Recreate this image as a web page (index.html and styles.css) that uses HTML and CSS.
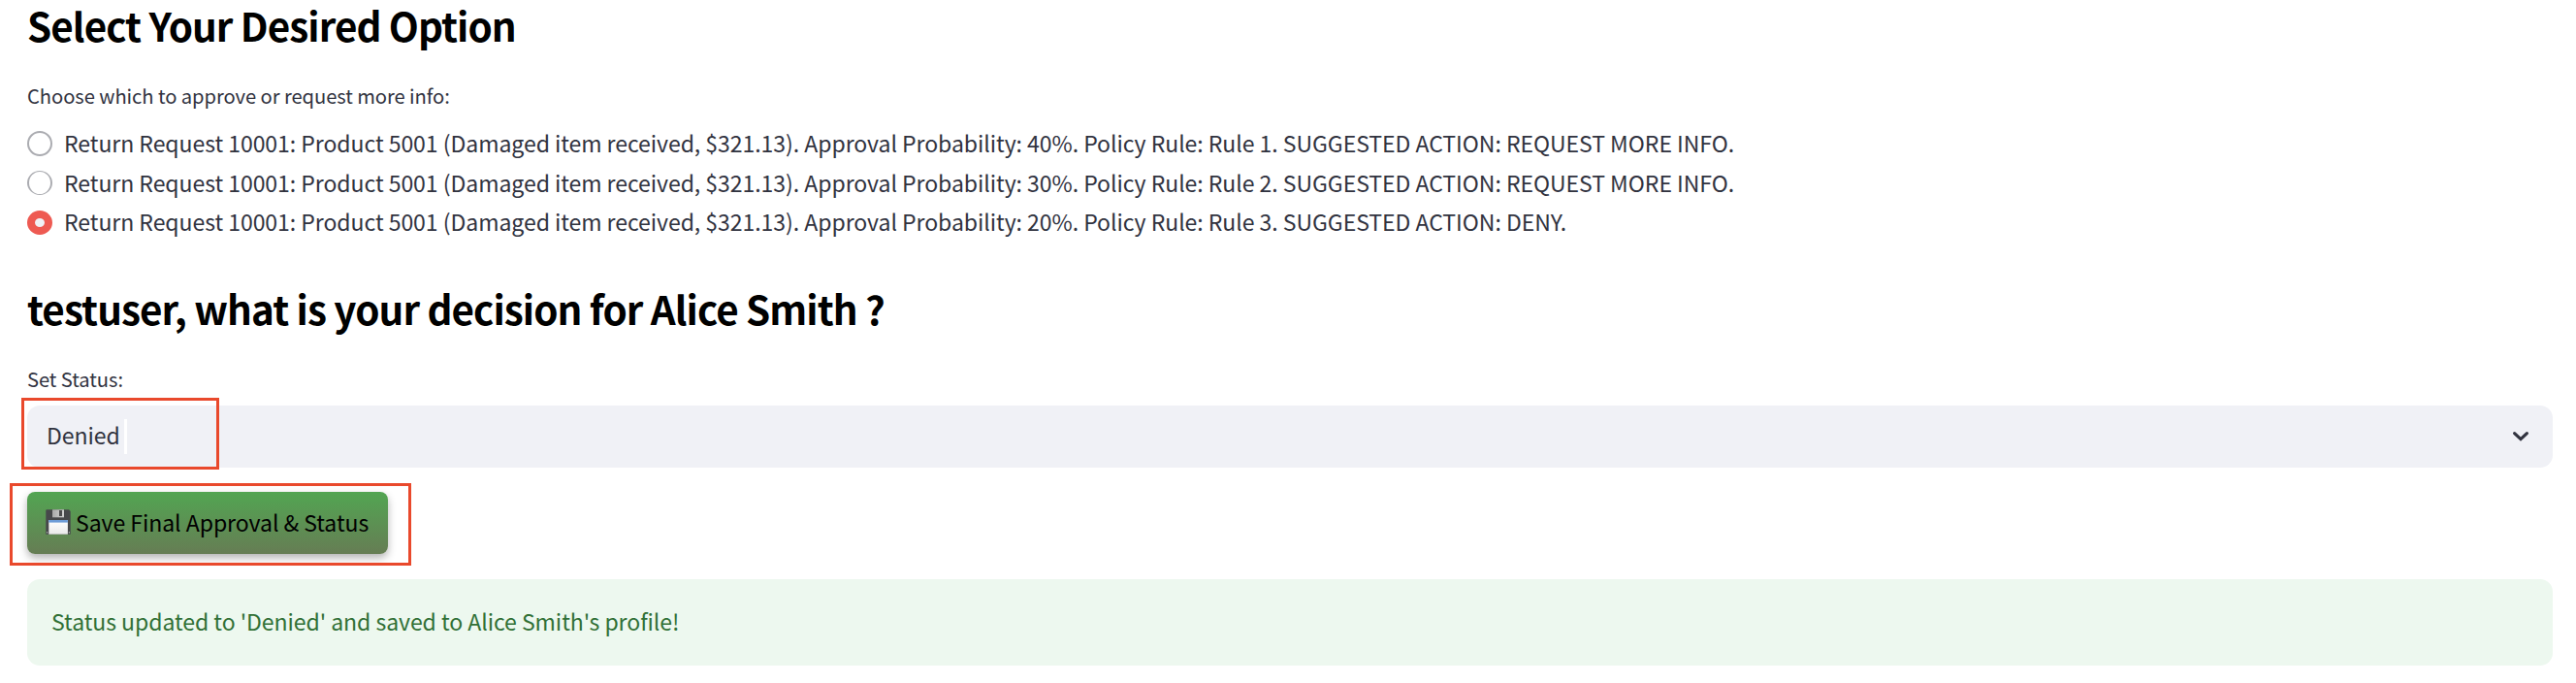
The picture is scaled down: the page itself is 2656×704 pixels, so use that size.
FILE: index.html
```html
<!DOCTYPE html>
<html lang="en">
<head>
<meta charset="utf-8">
<title>Return approval</title>
<link rel="stylesheet" href="styles.css">
</head>
<body>
<main class="page">
  <h3 class="heading">Select Your Desired Option</h3>
  <p class="label label-choose">Choose which to approve or request more info:</p>
  <div class="options" role="radiogroup">
    <div class="option"><span class="radio"></span><span class="option-text">Return Request 10001: Product 5001 (Damaged item received, $321.13). Approval Probability: 40%. Policy Rule: Rule 1. SUGGESTED ACTION: REQUEST MORE INFO.</span></div>
    <div class="option"><span class="radio radio-thin"></span><span class="option-text">Return Request 10001: Product 5001 (Damaged item received, $321.13). Approval Probability: 30%. Policy Rule: Rule 2. SUGGESTED ACTION: REQUEST MORE INFO.</span></div>
    <div class="option"><span class="radio checked"></span><span class="option-text">Return Request 10001: Product 5001 (Damaged item received, $321.13). Approval Probability: 20%. Policy Rule: Rule 3. SUGGESTED ACTION: DENY.</span></div>
  </div>
  <h3 class="heading heading-decision">testuser, what is your decision for Alice Smith ?</h3>
  <p class="label label-status">Set Status:</p>
  <div class="select">
    <span class="value">Denied</span><span class="caret"></span>
    <svg class="chevron" width="18" height="12" viewBox="0 0 18 12"><path d="M2.6 2.6 L9 8.6 L15.4 2.6" fill="none" stroke="#31333f" stroke-width="3.2" stroke-linecap="round" stroke-linejoin="miter"/></svg>
    <span class="mark mark-select"></span>
  </div>
  <div class="actions">
    <button class="save" type="button">
      <svg class="floppy" width="26" height="26" viewBox="0 0 26 26">
        <defs>
          <linearGradient id="metal" x1="0" x2="1" y1="0" y2="0"><stop offset="0" stop-color="#aaa"/><stop offset="1" stop-color="#d2d2d2"/></linearGradient>
          <linearGradient id="paper" x1="0" x2="0" y1="0" y2="1"><stop offset="0" stop-color="#fff"/><stop offset="1" stop-color="#e9e9e9"/></linearGradient>
        </defs>
        <path d="M1 .3H24L25.7 2V25.7H.3V1Q.3 .3 1 .3Z" fill="#47484b"/>
        <rect x="7" y=".3" width="12" height="8" fill="url(#metal)"/>
        <rect x="14" y="1" width="3" height="6" fill="#4b4b4d"/>
        <rect x="3.3" y="11" width="19.6" height="14.7" fill="url(#paper)"/>
        <rect x="3.3" y="11" width="19.6" height="2.6" fill="#6c9bd6"/>
        <rect x="1" y="23.2" width="1.2" height="1.2" fill="#bbb"/>
        <rect x="23.8" y="23.2" width="1.2" height="1.2" fill="#bbb"/>
      </svg>
      <span class="save-text">Save Final Approval &amp; Status</span>
    </button>
    <span class="mark mark-save"></span>
  </div>
  <div class="alert"><span class="alert-text">Status updated to 'Denied' and saved to Alice Smith's profile!</span></div>
</main>
</body>
</html>
```
FILE: styles.css
```css
* { box-sizing: border-box; }
body {
  margin: 0;
  background: #fff;
  color: #31333f;
  font-family: "Noto Sans CJK SC", "Noto Sans", sans-serif;
  font-size: 23.05px;
  letter-spacing: -.06px;
  white-space: nowrap;
}
.page { height: 704px; padding: 0 24px 0 28px; }
.heading {
  margin: 0;
  height: 50px;
  line-height: 52px;
  font-size: 40.4px;
  font-weight: 700;
  letter-spacing: -.91px;
  color: #000;
}
.label { margin: 0; height: 36px; line-height: 38px; font-size: 20.2px; letter-spacing: -.07px; }
.label-choose { margin-top: 30px; }
.options { display: grid; gap: 14.7px; margin-top: 19px; }
.option { display: flex; align-items: center; gap: 12px; height: 26px; }
.option-text { line-height: 26px; margin-top: -2px; }
.radio { width: 26px; height: 26px; border: 2px solid #abacb1; border-radius: 50%; background: #fff; }
.radio-thin { height: 25px; border-width: 1px 2px; }
.radio.checked { height: 25px; border: 8px solid #ee5a52; background: #f0f2f6; }
.heading-decision { margin-top: 49.6px; }
.label-status { margin-top: 30px; }
.select {
  position: relative;
  display: flex;
  align-items: center;
  height: 64px;
  margin-top: 10px;
  padding: 0 24px 0 20px;
  border-radius: 13px;
  background: #f0f1f6;
}
.value { line-height: 64px; margin-top: -4px; }
.caret { width: 3px; height: 36px; margin-left: 4px; background: #fff; }
.chevron { margin-left: auto; }
.mark { position: absolute; border: 3px solid #e9492c; }
.mark-select { left: -6px; top: -8px; width: 204px; height: 74px; }
.actions { position: relative; display: flex; height: 64px; margin-top: 25px; }
.mark-save { left: -18px; top: -9px; width: 414px; height: 85px; }
.save {
  display: flex;
  align-items: center;
  width: 372px;
  height: 64px;
  padding: 0 0 0 19px;
  gap: 5px;
  border: 0;
  border-radius: 8px;
  background: linear-gradient(#52a552, #667d54);
  box-shadow: 0 4px 8px rgba(0, 0, 0, .3);
  color: #000;
  font: inherit;
  letter-spacing: inherit;
}
.floppy { flex: none; margin-top: -2px; }
.save-text { line-height: 60px; margin-top: -2px; }
.alert {
  display: flex;
  align-items: center;
  height: 89px;
  margin-top: 26px;
  padding: 0 25px 3px;
  border-radius: 13px;
  background: #edf8ef;
  color: #317036;
}
```
